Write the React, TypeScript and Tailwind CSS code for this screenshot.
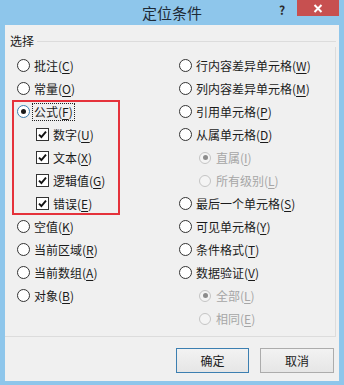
import React from "react";

const font = { fontFamily: '"Noto Sans CJK SC", "Noto Sans", sans-serif' };

function Label({ name, k, disabled, focus }: { name: string; k: string; disabled?: boolean; focus?: boolean }) {
  return (
    <span
      className={
        "text-[12px] leading-[14px] whitespace-nowrap " +
        (disabled ? "text-[#a6a6a6] " : "text-[#1b1b1b] ") +
        (focus ? "outline outline-1 outline-dotted outline-[#222] outline-offset-[1px]" : "")
      }
    >
      {name}(<span className="underline underline-offset-[2px]">{k}</span>)
    </span>
  );
}

function Radio({ checked, disabled, small }: { checked?: boolean; disabled?: boolean; small?: boolean }) {
  const size = small ? "w-[12px] h-[12px]" : "w-[13px] h-[13px]";
  const ring = disabled
    ? "border-[#c4c4c4] bg-[#f4f4f4]"
    : checked
    ? "border-[#3c7fb1] bg-white"
    : "border-[#333] bg-white";
  return (
    <span className={`${size} rounded-full border ${ring} flex items-center justify-center shrink-0`}>
      {checked && (
        <span className={"w-[5px] h-[5px] rounded-full " + (disabled ? "bg-[#8c8c8c]" : "bg-[#1b1b1b]")} />
      )}
    </span>
  );
}

function Check() {
  return (
    <span className="w-[13px] h-[13px] border border-[#333] bg-white flex items-center justify-center shrink-0">
      <svg width="9" height="9" viewBox="0 0 9 9">
        <path d="M1 4.6 L3.4 7 L8 1.6" fill="none" stroke="#111" strokeWidth="1.9" />
      </svg>
    </span>
  );
}

type Item = { name: string; k: string; kind: "radio" | "check" | "sub"; checked?: boolean; disabled?: boolean; focus?: boolean };

const left: Item[] = [
  { name: "批注", k: "C", kind: "radio" },
  { name: "常量", k: "O", kind: "radio" },
  { name: "公式", k: "F", kind: "radio", checked: true, focus: true },
  { name: "数字", k: "U", kind: "check" },
  { name: "文本", k: "X", kind: "check" },
  { name: "逻辑值", k: "G", kind: "check" },
  { name: "错误", k: "E", kind: "check" },
  { name: "空值", k: "K", kind: "radio" },
  { name: "当前区域", k: "R", kind: "radio" },
  { name: "当前数组", k: "A", kind: "radio" },
  { name: "对象", k: "B", kind: "radio" },
];

const right: Item[] = [
  { name: "行内容差异单元格", k: "W", kind: "radio" },
  { name: "列内容差异单元格", k: "M", kind: "radio" },
  { name: "引用单元格", k: "P", kind: "radio" },
  { name: "从属单元格", k: "D", kind: "radio" },
  { name: "直属", k: "I", kind: "sub", checked: true, disabled: true },
  { name: "所有级别", k: "L", kind: "sub", disabled: true },
  { name: "最后一个单元格", k: "S", kind: "radio" },
  { name: "可见单元格", k: "Y", kind: "radio" },
  { name: "条件格式", k: "T", kind: "radio" },
  { name: "数据验证", k: "V", kind: "radio" },
  { name: "全部", k: "L", kind: "sub", checked: true, disabled: true },
  { name: "相同", k: "E", kind: "sub", disabled: true },
];

function Row({ it }: { it: Item }) {
  if (it.kind === "check") {
    return (
      <div className="h-[23px] flex items-center gap-[4px] pl-[19px]">
        <Check />
        <Label name={it.name} k={it.k} />
      </div>
    );
  }
  if (it.kind === "sub") {
    return (
      <div className="h-[23px] flex items-center gap-[5px] pl-[20px]">
        <Radio small checked={it.checked} disabled={it.disabled} />
        <Label name={it.name} k={it.k} disabled={it.disabled} />
      </div>
    );
  }
  return (
    <div className="h-[23px] flex items-center gap-[4px]">
      <Radio checked={it.checked} />
      <Label name={it.name} k={it.k} focus={it.focus} />
    </div>
  );
}

export default function App() {
  return (
    <div className="w-[344px] h-[385px] bg-[#8ec6eb] flex flex-col select-none" style={font}>
      {/* Title bar */}
      <div className="h-[25px] relative flex items-center justify-center shrink-0">
        <span className="text-[15px] leading-[18px] text-[#1e2a36]">定位条件</span>
        <span className="absolute left-[279px] top-[1px] text-[12px] font-bold text-[#2a2a2a]">?</span>
        <div className="absolute left-[297px] top-0 w-[42px] h-[16px] bg-[#c75050] flex items-center justify-center">
          <svg width="10" height="9" viewBox="0 0 10 9">
            <path d="M1.5 1 L8.5 8 M8.5 1 L1.5 8" stroke="#fff" strokeWidth="2" />
          </svg>
        </div>
      </div>

      {/* Body */}
      <div className="flex-1 ml-[5px] mr-[5px] mb-[4px] bg-[#f0f0f0] flex flex-col">
        <div className="mt-[10px] ml-[5px] mr-[3px] flex items-center h-[12px] shrink-0">
          <span className="text-[12px] leading-[14px] text-[#1b1b1b]">选择</span>
          <div className="flex-1 h-px bg-[#dcdcdc] ml-[3px]" />
        </div>
        <div className="mr-[3px] h-[290px] shrink-0 border-r border-b border-[#dcdcdc] relative">
          <div className="absolute left-[7px] top-[53px] w-[108px] h-[115px] border-2 border-[#e5323b]" />
          <div className="relative grid grid-cols-[162px_1fr] pl-[12px] pt-[7px]">
            <div className="flex flex-col">
              {left.map((it) => (
                <Row key={it.name} it={it} />
              ))}
            </div>
            <div className="flex flex-col">
              {right.map((it) => (
                <Row key={it.name} it={it} />
              ))}
            </div>
          </div>
        </div>
        <div className="flex justify-end gap-[11px] mr-[5px] mt-[11px]">
          <button className="w-[73px] h-[25px] border border-[#3c7fb1] bg-gradient-to-b from-[#f2f2f2] to-[#e6e6e6] text-[12px] text-[#1b1b1b]">
            确定
          </button>
          <button className="w-[74px] h-[25px] border border-[#acacac] bg-gradient-to-b from-[#f2f2f2] to-[#e6e6e6] text-[12px] text-[#1b1b1b]">
            取消
          </button>
        </div>
      </div>
    </div>
  );
}
